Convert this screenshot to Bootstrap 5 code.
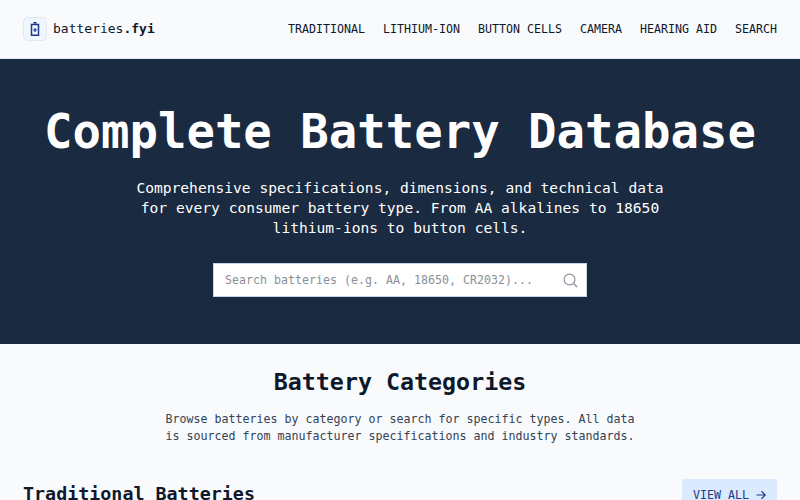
<!DOCTYPE html>
<html lang="en">
<head>
<meta charset="utf-8">
<title>batteries.fyi</title>
<link href="https://cdn.jsdelivr.net/npm/bootstrap@5.3.0/dist/css/bootstrap.min.css" rel="stylesheet">
<style>
    body {
        background-color: #f8fafc;
        color: #0f172a;
        font-family: "DejaVu Sans Mono", monospace;
        overflow: hidden;
    }

    .site-nav {
        height: 59px;
        padding: 0 23px;
        border-bottom: 1px solid #e2e8f0;
    }

    .logo-box {
        width: 24px;
        height: 24px;
        border-radius: 5px;
        background-color: #eff6ff;
        border: 1px solid #e2e8f0;
    }

    .logo-text {
        font-size: 13px;
        color: #0f172a;
    }

    .logo-gap {
        gap: 6px;
    }

    .nav-gap {
        gap: 18px;
        padding-top: 2px;
    }

    .site-link {
        font-size: 11.63px;
        color: #0f172a;
        text-decoration: none;
    }

    .hero {
        height: 285px;
        background-color: #1a2a40;
        padding-top: 45px;
    }

    .hero-title {
        font-size: 47.3px;
        line-height: 56px;
        margin-bottom: 18px;
    }

    .hero-text {
        font-size: 14.6px;
        line-height: 20px;
        width: 560px;
        margin-bottom: 25px;
    }

    .search-box {
        width: 374px;
        height: 34px;
        padding: 0 8px 0 9px;
        background-color: #fff;
        border: 1px solid #cbd5e1;
    }

    .search-box input {
        font-size: 11.63px;
        padding-top: 3px;
        color: #0f172a;
        outline: none;
    }

    .search-box input::placeholder {
        color: #8a8f98;
    }

    .section-title {
        font-size: 23.3px;
        line-height: 28px;
        padding-top: 24px;
        margin-bottom: 15px;
    }

    .section-text {
        font-size: 11.63px;
        line-height: 17px;
        color: #334155;
        width: 480px;
    }

    .group-head {
        padding: 0 23px;
        margin-top: 34px;
    }

    .group-title {
        font-size: 18.35px;
        line-height: 24px;
        margin-top: 3px;
    }

    .view-all {
        font-size: 11.63px;
        line-height: 18px;
        gap: 7px;
        width: 95px;
        padding: 7px 0 7px 11px;
        background-color: #dbeafe;
        color: #1e3a8a;
        text-decoration: none;
    }
</style>
</head>
<body>
<nav class="site-nav d-flex align-items-center justify-content-between">
    <a class="logo-text logo-gap d-flex align-items-center text-decoration-none" href="#">
        <span class="logo-box d-flex align-items-center justify-content-center">
            <svg width="10" height="14" viewBox="0 0 10 14" fill="none" stroke="#1e3a8a" stroke-width="1.5">
                <path d="M3.5 .8h3M1.5 2.5h7v10.7h-7z"/>
                <path d="M3 8h4M5 6v4" stroke-width="1.2"/>
            </svg>
        </span>
        <span>batteries<b>.fyi</b></span>
    </a>
    <div class="nav-gap d-flex">
        <a class="site-link" href="#">TRADITIONAL</a>
        <a class="site-link" href="#">LITHIUM-ION</a>
        <a class="site-link" href="#">BUTTON CELLS</a>
        <a class="site-link" href="#">CAMERA</a>
        <a class="site-link" href="#">HEARING AID</a>
        <a class="site-link" href="#">SEARCH</a>
    </div>
</nav>

<section class="hero text-white text-center">
    <h1 class="hero-title fw-bold">Complete Battery Database</h1>
    <p class="hero-text mx-auto">Comprehensive specifications, dimensions, and technical data for every consumer battery type. From AA alkalines to 18650 lithium-ions to button cells.</p>
    <div class="search-box mx-auto d-flex align-items-center">
        <input class="border-0 flex-grow-1 bg-transparent" type="text" placeholder="Search batteries (e.g. AA, 18650, CR2032)..." aria-label="Search">
        <svg width="15" height="15" viewBox="0 0 15 15" fill="none" stroke="#8a8f98" stroke-width="1.2">
            <circle cx="6.5" cy="6.5" r="5.4"/>
            <path d="M10.5 10.5l3.5 3.5"/>
        </svg>
    </div>
</section>

<section class="text-center">
    <h2 class="section-title fw-bold">Battery Categories</h2>
    <p class="section-text mx-auto">Browse batteries by category or search for specific types. All data is sourced from manufacturer specifications and industry standards.</p>
</section>

<div class="group-head d-flex align-items-start justify-content-between">
    <h3 class="group-title fw-bold">Traditional Batteries</h3>
    <a class="view-all d-flex align-items-center" href="#">
        <span>VIEW ALL</span>
        <svg width="10" height="10" viewBox="0 0 10 10" fill="none" stroke="#1e3a8a" stroke-width="1.2">
            <path d="M.5 5h8.5M5.5 1.2L9.2 5 5.5 8.8"/>
        </svg>
    </a>
</div>

<script src="https://cdn.jsdelivr.net/npm/bootstrap@5.3.0/dist/js/bootstrap.bundle.min.js"></script>
</body>
</html>
